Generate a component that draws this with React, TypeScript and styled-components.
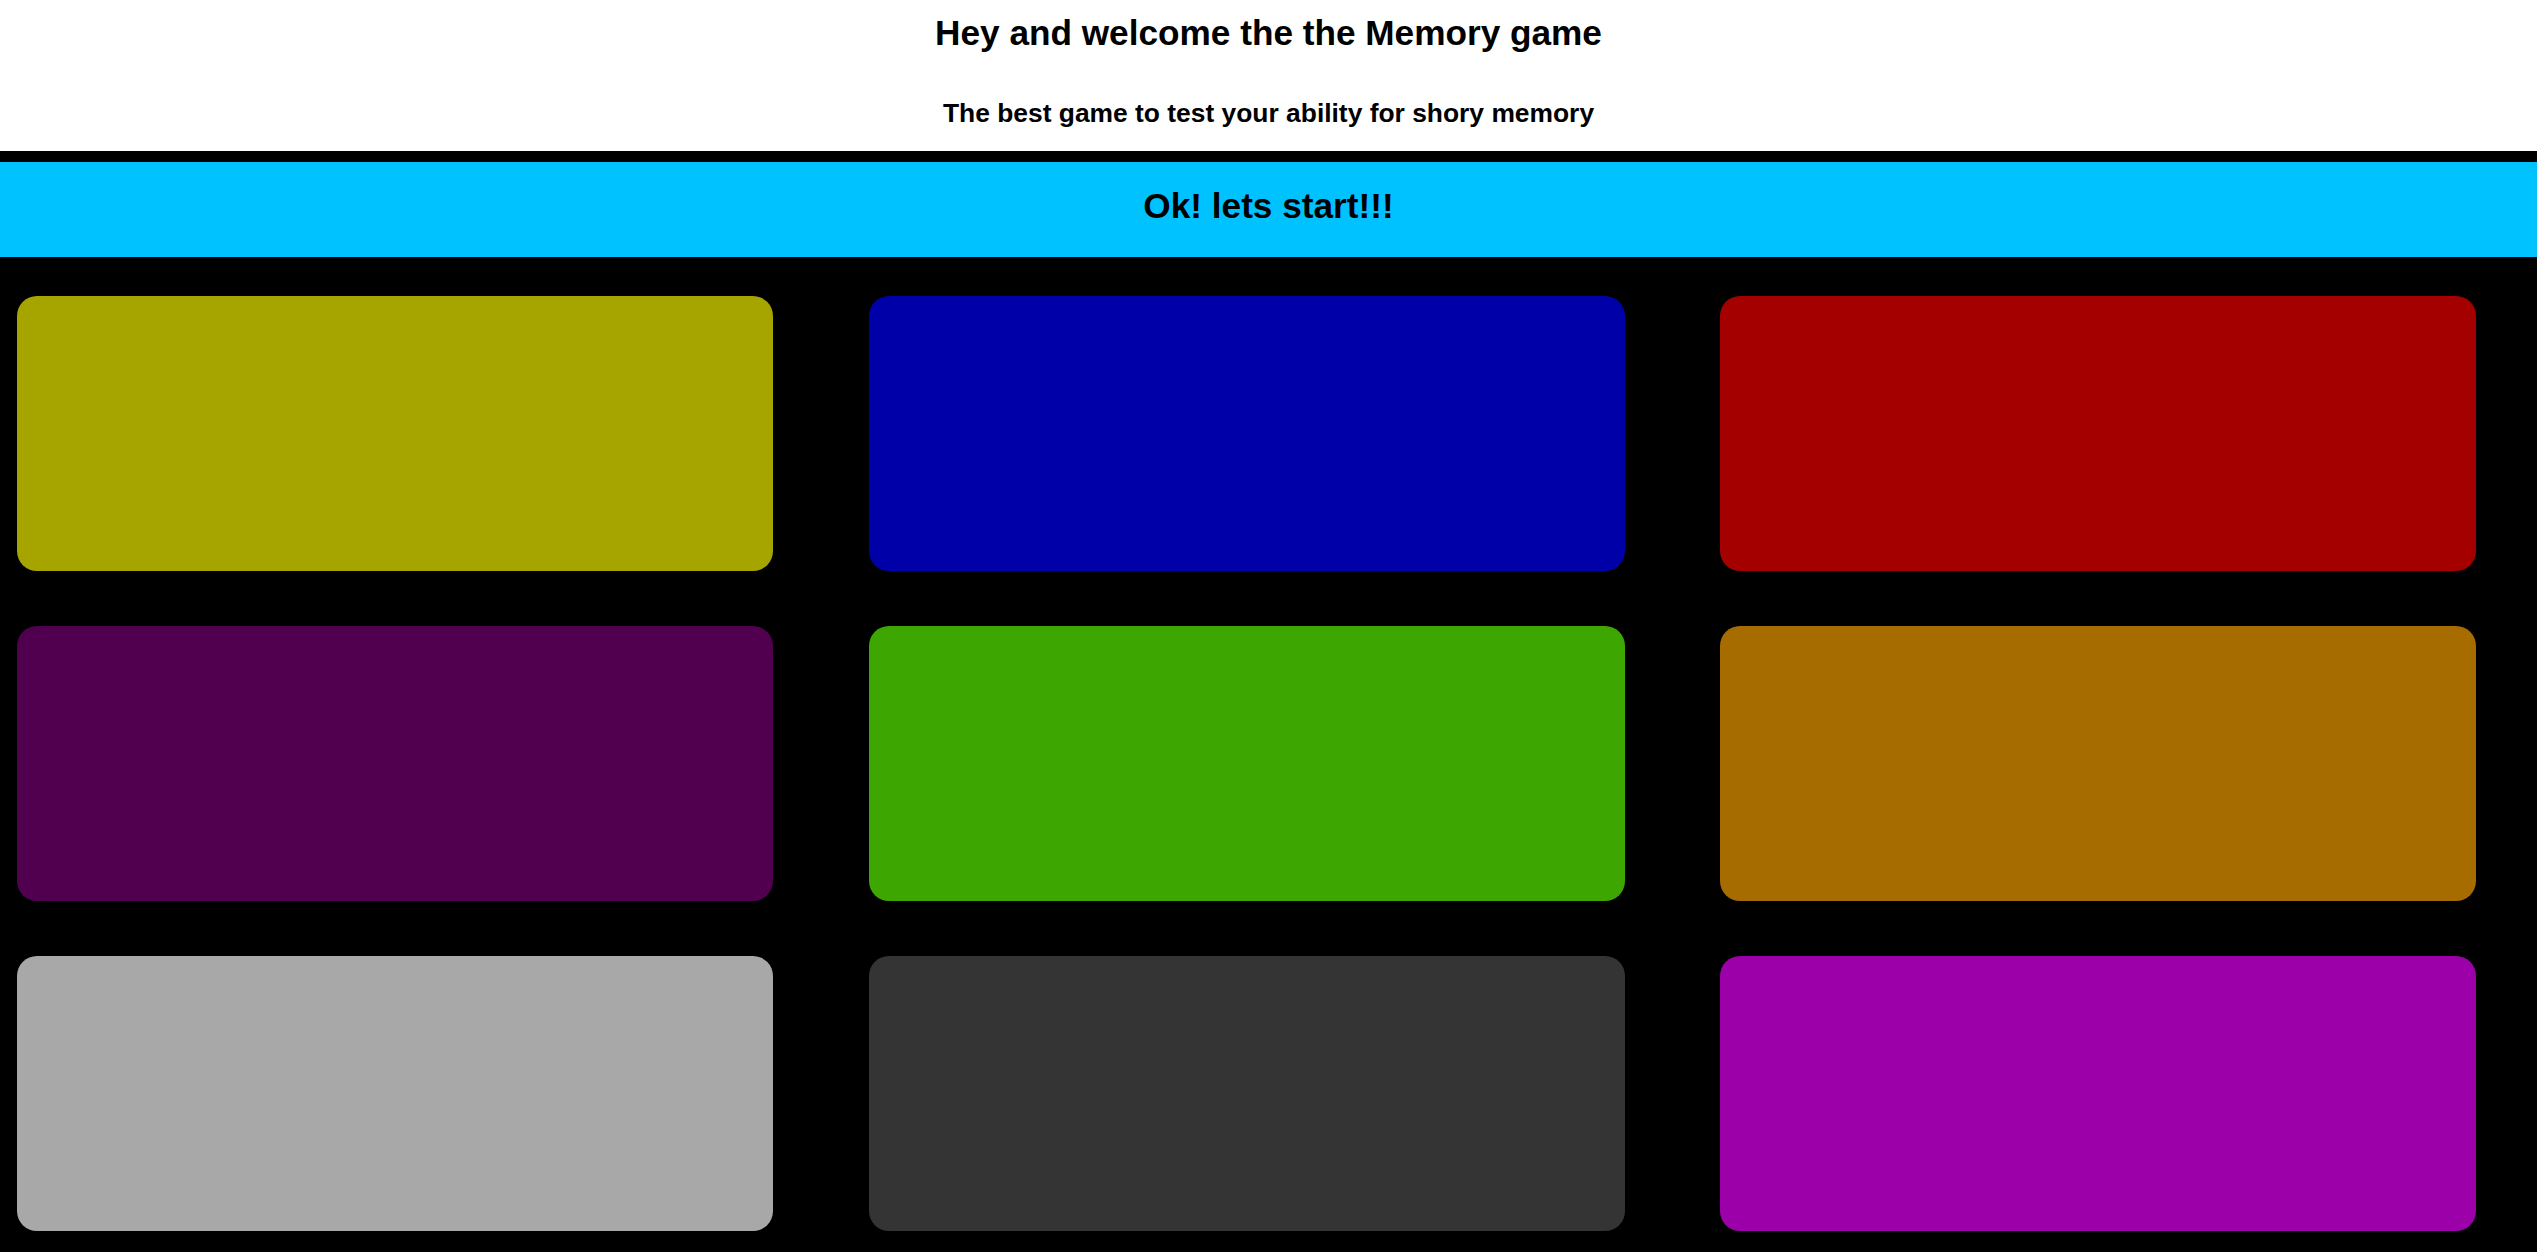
import React from "react";
import styled, { createGlobalStyle } from "styled-components";

const GlobalStyle = createGlobalStyle`
  html, body {
    margin: 0;
    padding: 0;
    background: #000000;
  }
  body {
    font-family: "Liberation Sans", Arial, sans-serif;
  }
`;

const Page = styled.div`
  min-height: 100vh;
  background: #000000;
  display: flex;
  flex-direction: column;
`;

const Header = styled.header`
  background: #ffffff;
  height: 151px;
  box-sizing: border-box;
  padding-top: 13px;
  display: flex;
  flex-direction: column;
  align-items: center;
  text-align: center;
  color: #000000;
`;

const Title = styled.h1`
  margin: 0;
  font-size: 35.2px;
  line-height: 40px;
  font-weight: 700;
`;

const Subtitle = styled.h2`
  margin: 45px 0 0;
  font-size: 26.4px;
  line-height: 30px;
  font-weight: 700;
`;

const StartBar = styled.div`
  margin-top: 11px;
  background: #00c2ff;
  height: 95px;
  box-sizing: border-box;
  padding-top: 24px;
  text-align: center;
  font-size: 35.2px;
  line-height: 40px;
  font-weight: 700;
  color: #000000;
`;

const Board = styled.main`
  display: grid;
  grid-template-columns: repeat(3, 756px);
  grid-auto-rows: 275px;
  column-gap: 95.5px;
  row-gap: 55px;
  padding: 39px 0 21px 17px;
`;

const Tile = styled.div<{ $color: string }>`
  background: ${(p) => p.$color};
  border-radius: 20px;
`;

const colors = [
  "#a6a500",
  "#0000a8",
  "#a40000",
  "#51004f",
  "#3ea600",
  "#a66c00",
  "#a8a8a8",
  "#343434",
  "#9c00a8",
];

export default function App() {
  return (
    <>
      <GlobalStyle />
      <Page>
        <Header>
          <Title>Hey and welcome the the Memory game</Title>
          <Subtitle>The best game to test your ability for shory memory</Subtitle>
        </Header>
        <StartBar>Ok! lets start!!!</StartBar>
        <Board>
          {colors.map((c, i) => (
            <Tile key={i} $color={c} />
          ))}
        </Board>
      </Page>
    </>
  );
}
